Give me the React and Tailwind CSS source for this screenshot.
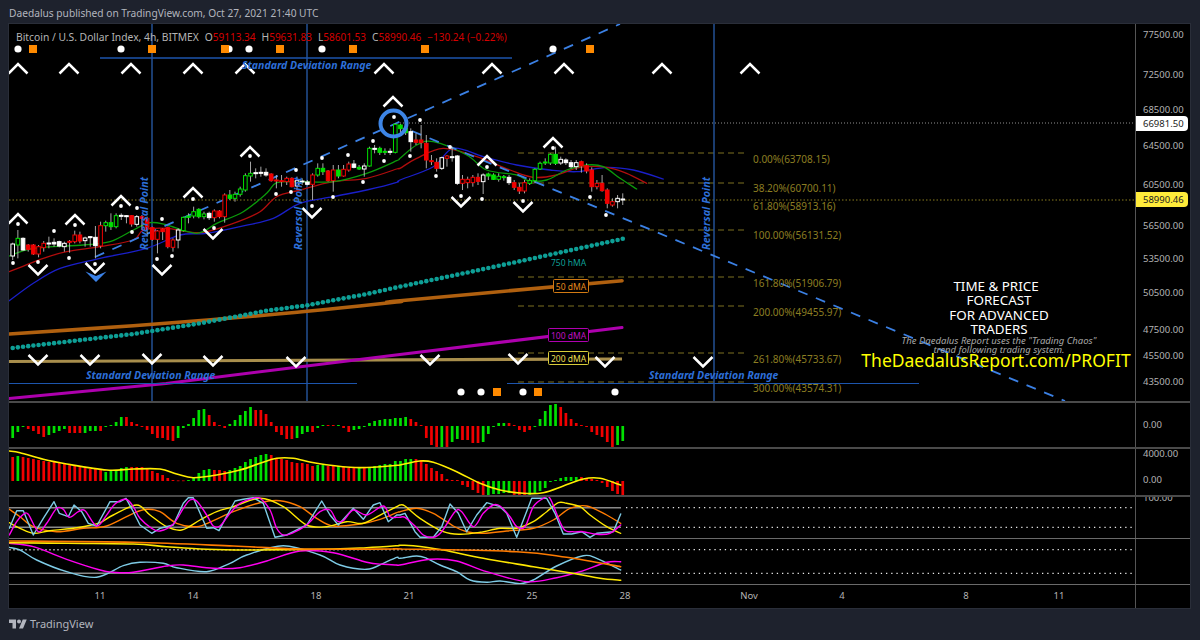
import React from 'react';

// x of a 4h bar on the time scale
const X = (i) => 12.7 + 5.17 * i;
// turn crop readings (3x) back into page coordinates
const z = (ox, oy, pts) => pts.map(([x, y]) => [ox + x / 3, oy + y / 3]);

const smooth = (pts) => {
  let d = `M${pts[0][0].toFixed(1)} ${pts[0][1].toFixed(1)}`;
  for (let i = 0; i < pts.length - 1; i++) {
    const p0 = pts[i - 1] || pts[i];
    const p1 = pts[i];
    const p2 = pts[i + 1];
    const p3 = pts[i + 2] || p2;
    const c1 = [p1[0] + (p2[0] - p0[0]) / 6, p1[1] + (p2[1] - p0[1]) / 6];
    const c2 = [p2[0] - (p3[0] - p1[0]) / 6, p2[1] - (p3[1] - p1[1]) / 6];
    d += `C${c1[0].toFixed(1)} ${c1[1].toFixed(1)} ${c2[0].toFixed(1)} ${c2[1].toFixed(1)} ${p2[0].toFixed(1)} ${p2[1].toFixed(1)}`;
  }
  return d;
};
const straight = (pts) => 'M' + pts.map((p) => `${p[0].toFixed(1)} ${p[1].toFixed(1)}`).join('L');

const GREEN = '#00e000';
const RED = '#f00000';
const WHITE = '#ffffff';

// kind, body top, body bottom, wick top, wick bottom (crop coordinates)
const candlesA = [
  ['w', 192, 228, 188, 240], ['g', 175, 195, 150, 235], ['W', 175, 210, 172, 212], ['R', 195, 208, 192, 215],
  ['R', 195, 222, 192, 225], ['r', 200, 222, 195, 232], ['r', 190, 203, 183, 215], ['W', 189, 192, 170, 205],
  ['W', 187, 192, 175, 200], ['W', 185, 198, 182, 202], ['w', 190, 200, 185, 215], ['R', 184, 187, 180, 218],
  ['r', 165, 185, 152, 190], ['R', 165, 183, 155, 190], ['w', 174, 182, 170, 200], ['W', 170, 173, 168, 200],
  ['W', 172, 197, 138, 235], ['r', 137, 198, 125, 205], ['g', 128, 137, 122, 155], ['G', 128, 140, 100, 150],
  ['g', 107, 140, 100, 145], ['W', 106, 108, 100, 120], ['W', 107, 110, 105, 130], ['R', 107, 132, 105, 140],
  ['w', 110, 133, 105, 140], ['R', 110, 115, 105, 150], ['R', 115, 147, 110, 170], ['R', 143, 178, 140, 182],
  ['r', 153, 178, 150, 220], ['R', 147, 155, 145, 180], ['R', 143, 200, 140, 205], ['r', 180, 202, 175, 215],
  ['w', 150, 180, 145, 205], ['g', 112, 152, 110, 155], ['G', 108, 112, 100, 130], ['g', 95, 108, 80, 115],
  ['G', 88, 110, 85, 115], ['g', 102, 110, 95, 118], ['W', 100, 113, 95, 120], ['r', 93, 113, 88, 125],
  ['R', 93, 110, 90, 115], ['r', 45, 110, 40, 128],
];
const candlesB = [
  ['G', 585, 595, 570, 600], ['g', 583, 595, 575, 605], ['g', 567, 583, 560, 590], ['g', 527, 570, 520, 575],
  ['g', 520, 528, 485, 545], ['W', 518, 520, 505, 535], ['W', 517, 520, 500, 530], ['W', 517, 525, 505, 530],
  ['R', 522, 542, 520, 545], ['R', 540, 543, 525, 565], ['R', 542, 545, 525, 560], ['r', 535, 545, 530, 555],
  ['R', 535, 560, 532, 562], ['w', 542, 558, 530, 570], ['W', 543, 546, 535, 555], ['W', 546, 553, 540, 556],
  ['r', 525, 553, 520, 600], ['g', 505, 525, 490, 530], ['G', 505, 515, 490, 525], ['R', 513, 542, 510, 545],
  ['r', 510, 542, 495, 575], ['G', 510, 528, 495, 535], ['r', 508, 528, 495, 530], ['r', 492, 510, 485, 515],
  ['W', 492, 502, 480, 505], ['G', 502, 507, 495, 510], ['w', 498, 507, 490, 530], ['g', 445, 498, 440, 500],
  ['W', 445, 447, 435, 460], ['G', 445, 457, 440, 465], ['G', 454, 456, 445, 465], ['W', 454, 457, 445, 465],
  ['g', 373, 457, 370, 460], ['G', 375, 386, 372, 400],
];
const candlesC = [
  ['G', 115, 128, 105, 135], ['W', 125, 155, 115, 185], ['R', 150, 157, 130, 165], ['R', 150, 158, 105, 175],
  ['R', 160, 210, 135, 235], ['R', 212, 215, 195, 225], ['R', 217, 235, 205, 245], ['w', 203, 235, 200, 240],
  ['r', 198, 205, 195, 230], ['W', 200, 202, 170, 215], ['W', 198, 280, 195, 285], ['r', 268, 280, 255, 300],
  ['r', 268, 278, 260, 295], ['r', 262, 278, 255, 290], ['R', 262, 274, 250, 285], ['w', 255, 275, 250, 312],
  ['G', 252, 258, 248, 270], ['G', 255, 268, 250, 270], ['g', 259, 268, 250, 275], ['G', 260, 262, 255, 272],
  ['W', 262, 278, 255, 285], ['R', 278, 292, 270, 300], ['R', 292, 303, 280, 312], ['r', 278, 303, 270, 310],
  ['g', 272, 280, 265, 285], ['g', 238, 272, 235, 280], ['g', 220, 237, 215, 240], ['G', 216, 219, 205, 225],
  ['g', 193, 219, 190, 225], ['G', 193, 220, 170, 225], ['w', 208, 219, 200, 225], ['W', 210, 218, 205, 225],
  ['W', 218, 230, 210, 235], ['w', 218, 230, 210, 240], ['R', 215, 228, 212, 248], ['R', 227, 243, 220, 250],
  ['R', 240, 290, 232, 305], ['r', 280, 290, 270, 298], ['R', 280, 302, 255, 305], ['R', 300, 340, 295, 355],
  ['r', 335, 345, 325, 350], ['w', 325, 335, 315, 355], ['W', 327, 329, 310, 345],
];
const candles = [
  ...candlesA.map(([k, a, b, c, d]) => [k, 180 + a / 3, 180 + b / 3, 180 + c / 3, 180 + d / 3]),
  ...candlesB.map(([k, a, b, c, d]) => [k, a / 3, b / 3, c / 3, d / 3]),
  ...candlesC.map(([k, a, b, c, d]) => [k, 90 + a / 3, 90 + b / 3, 90 + c / 3, 90 + d / 3]),
];

const maGreen = [
  ...z(0, 180, [[28, 228], [100, 205], [250, 195], [330, 185], [400, 150], [450, 128], [500, 135], [590, 160], [650, 130], [730, 95], [800, 40]]),
  ...z(0, 0, [[830, 548], [900, 545], [1000, 545], [1100, 520], [1190, 482]]),
  ...z(400, 90, [[0, 205], [50, 165], [100, 155], [200, 195], [260, 240], [350, 255], [385, 272], [440, 270], [500, 240], [560, 225], [610, 230], [660, 265], [710, 297]]),
];
const maRed = [
  ...z(0, 180, [[28, 275], [130, 235], [200, 215], [300, 200], [400, 180], [430, 150], [500, 145], [600, 158], [700, 130], [780, 95]]),
  ...z(0, 0, [[830, 590], [900, 570], [1000, 545], [1100, 535], [1190, 507]]),
  ...z(400, 90, [[0, 235], [50, 205], [130, 175], [230, 200], [330, 240], [400, 262], [470, 255], [540, 232], [620, 232], [680, 250], [740, 280]]),
];
const maBlue = [
  ...z(0, 180, [[28, 362], [100, 310], [180, 265], [300, 235], [440, 205], [540, 165], [620, 160], [720, 140], [820, 115], [900, 70], [1000, 50], [1100, 30], [1190, 7]]),
  ...z(400, 90, [[0, 270], [100, 230], [160, 175], [250, 200], [350, 225], [450, 240], [530, 245], [620, 232], [700, 240], [790, 267]]),
];

// 750 hMA is plotted as dots, one per bar
const tealKnots = [
  ...z(0, 180, [[28, 505], [200, 485], [400, 462], [600, 430], [800, 392], [920, 376], [1100, 342], [1190, 322]]),
  ...z(400, 90, [[0, 590], [200, 548], [400, 505], [675, 445]]),
];
const tealAt = (x) => {
  for (let i = 0; i < tealKnots.length - 1; i++) {
    const [a, b] = tealKnots[i];
    const [c, d] = tealKnots[i + 1];
    if (x >= a && x <= c) return b + ((x - a) / (c - a)) * (d - b);
  }
  return tealKnots[0][1];
};

const caretsUp = [
  [18, 64], [69, 64], [131, 64], [193, 64], [245, 64], [384, 64], [492, 64], [564, 64], [662, 64], [750, 64],
  [250, 147], [393, 97], [18, 214], [75, 215], [121, 196], [193, 188], [553, 138], [487, 156],
];
const caretsDown = [
  [38, 265], [95, 263], [162, 265], [213, 229], [312, 208], [461, 197], [523, 202],
  [38, 355], [90, 355], [152, 354], [213, 356], [296, 357], [430, 355], [518, 354], [605, 357], [703, 357],
];
const smallDots = [
  [250, 156], [296, 170], [322, 158], [348, 155], [373, 141], [394, 117], [384, 161], [363, 182], [333, 197], [276, 194],
  [291, 192], [13, 263], [38, 262], [69, 258], [95, 264], [157, 259], [172, 256], [214, 228], [132, 232], [54, 231],
  [18, 224], [75, 225], [121, 206], [137, 208], [162, 219], [193, 199], [312, 206], [410, 156], [420, 120], [436, 176],
  [450, 147], [461, 196], [482, 199], [487, 167], [523, 201], [553, 148], [590, 197], [606, 215],
];
const bigDots = [[18, 49], [121, 49], [229, 49], [249, 49], [322, 49], [553, 49], [461, 392], [481, 392], [523, 392], [615, 392]];
const squares = [[33, 49], [152, 49], [225, 49], [280, 49], [353, 49], [425, 49], [590, 49], [497, 392], [538, 392]];

const fibLines = [153, 183, 230, 277, 306, 353, 382];
const fibLabels = [
  ['0.00%(63708.15)', 163], ['38.20%(60700.11)', 192], ['61.80%(58913.16)', 210], ['100.00%(56131.52)', 239],
  ['161.80%(51906.79)', 287], ['200.00%(49455.97)', 316], ['261.80%(45733.67)', 363], ['300.00%(43574.31)', 392],
];

const prices = [
  ['77500.00', 'top-[4px]'], ['72500.00', 'top-[44px]'], ['68500.00', 'top-[79px]'], ['64500.00', 'top-[115px]'],
  ['60500.00', 'top-[154px]'], ['56500.00', 'top-[195px]'], ['53500.00', 'top-[228px]'], ['50500.00', 'top-[262px]'],
  ['47500.00', 'top-[299px]'], ['45500.00', 'top-[325px]'], ['43500.00', 'top-[351px]'],
];

// signed bar heights, [colour, px]
const g = (h) => ['g', h];
const r = (h) => ['r', h];
const aoBars = [
  g(-12), g(-6), g(-1), r(-3), r(-5), r(-8), r(-11), g(-9), g(-7), g(-5), g(-3), r(-7), r(-7), r(-7), g(-7), g(-5), g(-5), r(-5), g(-1), g(1),
  g(4), g(9), r(9), r(4), r(2), r(-1), r(-4), r(-8), r(-12), r(-12), r(-14), r(-15), g(-12), g(-2), g(2), g(8), g(16), g(17), r(11), r(4),
  r(1), r(-2), g(2), g(6), g(11), g(15), g(19), r(16), r(16), r(12), r(4), r(-6), r(-9), r(-13), r(-13), g(-12), g(-8), g(-6), r(-6), g(-2),
  g(1), r(1), r(1), g(1), r(-2), r(-6), g(-4), g(-3), g(-1), g(3), g(5), g(6), g(7), g(7), g(8), g(8), g(9), r(7), r(4), r(1),
  r(-12), r(-19), r(-22), g(-21), r(-21), g(-16), g(-13), r(-14), r(-14), r(-17), r(-17), g(-16), g(-8), g(-1), g(3), g(3), r(3), r(1), r(-4), r(-6),
  r(-4), g(-1), g(7), g(15), g(21), g(22), r(19), r(13), r(7), r(3), r(1), r(-1), r(-6), r(-9), r(-11), r(-16), r(-21), g(-19), g(-15),
];
const macdBars = [
  r(24), g(25), r(24), r(23), r(22), r(21), r(20), r(19), r(19), r(18), r(18), r(17), r(16), r(14), r(13), r(12), r(12), r(11),
  g(9), g(10), g(11), g(13), g(14), r(14), r(14), r(14), r(12), r(10), r(8), r(6), r(3), r(1), r(0.6), r(0.6), g(1), g(4), g(8), g(11),
  g(12), r(11), r(11), r(10), g(11), g(13), g(15), g(19), g(22), g(24), g(26), g(27), r(26), r(23), r(22), r(21), r(19), r(18), r(18), r(17),
  r(15), g(16), g(16), r(15), r(15), g(15), r(14), r(13), r(13), g(13), r(13), g(14), g(15), g(16), g(17), g(17), g(20), g(20), g(22), g(22),
  r(22), r(21), r(17), r(13), r(10), r(7), r(2), r(1), r(1), r(-4), r(-6), r(-9), r(-12), r(-14), g(-14), g(-13), g(-13), g(-12), g(-12), r(-14),
  r(-14), r(-14), g(-14), g(-13), g(-10), g(-7), g(-1), g(1), g(3), g(4), g(4), g(4), r(4), r(3), r(2), r(1), r(-2), r(-6), r(-10), r(-13), r(-15),
];

const Bars = ({ bars, base }) => (
  <g>
    {bars.map(([c, h], i) => (
      <rect
        key={i}
        x={X(i) - 1.35}
        y={h > 0 ? base - h : base}
        width="2.7"
        height={Math.max(Math.abs(h), 0.8)}
        fill={c === 'g' ? GREEN : RED}
      />
    ))}
  </g>
);

const macdSignal = z(0, 400, [[28, 153], [60, 158], [130, 178], [200, 192], [320, 210], [400, 207], [480, 207], [530, 222], [580, 233], [650, 225], [720, 210], [780, 190], [830, 175], [880, 175], [950, 190], [1050, 202], [1120, 202], [1190, 196]]).concat(
  z(400, 400, [[0, 195], [60, 183], [100, 187], [170, 215], [240, 250], [300, 270], [370, 280], [430, 278], [490, 258], [550, 237], [600, 235], [662, 255]])
);

const st = {
  cyan: z(0, 400, [[28, 385], [50, 332], [70, 332], [100, 405], [130, 355], [162, 305], [178, 340], [205, 350], [222, 315], [245, 335], [265, 370], [290, 378], [330, 305], [360, 305], [378, 295], [400, 335], [420, 375], [455, 400], [480, 385], [520, 375], [550, 310], [565, 293], [580, 293], [620, 385], [640, 383], [657, 392], [690, 330], [705, 303], [730, 298], [760, 293], [790, 310], [825, 412], [860, 405], [880, 395], [920, 375], [965, 303], [990, 345], [1015, 375], [1060, 325], [1090, 358], [1120, 315], [1140, 308], [1165, 365], [1190, 345]]).concat(
    z(400, 400, [[0, 345], [15, 340], [45, 395], [60, 412], [100, 412], [125, 380], [150, 312], [175, 340], [200, 395], [230, 345], [260, 308], [300, 320], [320, 340], [350, 412], [395, 295], [440, 295], [465, 340], [490, 402], [515, 402], [545, 395], [570, 412], [590, 400], [640, 395], [662, 342]])
  ),
  magenta: z(0, 400, [[28, 405], [50, 365], [70, 343], [85, 343], [115, 395], [140, 370], [170, 325], [190, 328], [208, 352], [235, 335], [255, 332], [290, 378], [320, 345], [345, 312], [378, 298], [400, 320], [420, 355], [455, 385], [480, 393], [520, 372], [550, 325], [570, 300], [590, 303], [620, 345], [640, 378], [660, 378], [690, 340], [720, 310], [760, 295], [780, 295], [810, 330], [830, 385], [850, 405], [880, 398], [920, 375], [960, 335], [990, 330], [1010, 362], [1030, 362], [1060, 330], [1100, 345], [1150, 318], [1170, 350], [1190, 352]]).concat(
    z(400, 400, [[0, 352], [15, 352], [45, 378], [70, 405], [100, 412], [125, 395], [165, 335], [185, 335], [220, 380], [250, 340], [280, 315], [300, 318], [330, 350], [350, 380], [375, 380], [400, 320], [430, 295], [450, 295], [490, 385], [520, 395], [550, 395], [590, 403], [630, 400], [662, 375]])
  ),
  yellow: z(0, 400, [[28, 368], [60, 385], [100, 400], [150, 392], [220, 385], [260, 378], [300, 368], [340, 345], [410, 315], [450, 345], [500, 380], [545, 390], [600, 360], [650, 335], [700, 320], [780, 295], [850, 320], [920, 375], [980, 380], [1040, 365], [1090, 370], [1150, 340], [1190, 320]]).concat(
    z(400, 400, [[0, 315], [15, 318], [60, 355], [130, 395], [180, 403], [240, 397], [300, 385], [350, 385], [400, 365], [440, 335], [475, 308], [500, 310], [540, 320], [570, 345], [620, 380], [662, 400]])
  ),
  orange: z(0, 400, [[28, 328], [60, 350], [100, 380], [170, 395], [250, 385], [320, 378], [400, 340], [440, 328], [480, 335], [530, 370], [590, 380], [640, 362], [700, 335], [780, 308], [840, 302], [900, 320], [950, 355], [1000, 378], [1080, 372], [1140, 358], [1190, 338]]).concat(
    z(400, 400, [[0, 335], [50, 325], [100, 340], [160, 378], [200, 395], [250, 400], [320, 393], [400, 385], [460, 360], [510, 325], [560, 318], [620, 345], [662, 370]])
  ),
};
const st2 = {
  yellow: z(0, 400, [[28, 428], [200, 430], [400, 432], [500, 440], [620, 448], [760, 450], [1000, 447], [1100, 443], [1190, 437]]).concat(
    z(400, 400, [[0, 436], [40, 437], [130, 450], [250, 475], [400, 500], [530, 522], [600, 535], [662, 541]])
  ),
  orange: z(0, 400, [[28, 423], [400, 427], [700, 438], [900, 447], [1190, 447]]).concat(z(400, 400, [[0, 447], [350, 455], [500, 472], [662, 500]])),
  magenta: z(0, 400, [[28, 430], [100, 440], [200, 478], [300, 510], [340, 517], [400, 517], [500, 498], [550, 495], [640, 505], [720, 503], [800, 483], [900, 453], [1000, 458], [1100, 487], [1150, 493], [1190, 495]]).concat(
    z(400, 400, [[0, 495], [90, 478], [170, 483], [260, 515], [380, 545], [470, 533], [540, 515], [620, 487], [662, 485]])
  ),
  cyan: z(0, 400, [[28, 442], [60, 450], [110, 480], [200, 515], [290, 532], [370, 497], [420, 487], [490, 490], [530, 503], [620, 515], [690, 490], [740, 465], [850, 437], [960, 465], [1020, 495], [1100, 508], [1150, 490], [1190, 472]]).concat(
    z(400, 400, [[0, 475], [50, 468], [80, 475], [120, 495], [170, 515], [210, 540], [260, 547], [300, 543], [360, 551], [400, 540], [470, 498], [550, 467], [590, 475], [662, 510]])
  ),
};

const Line = ({ d, color, w = 1.3 }) => <path d={d} fill="none" stroke={color} strokeWidth={w} strokeLinejoin="round" strokeLinecap="round" />;

// one level of an oscillator: solid grey up to the last bar, dots after it
const Level = ({ y, dottedLeft }) => (
  <g>
    <line x1="9" x2="621" y1={y} y2={y} stroke="#8a8a8a" strokeWidth="1.6" strokeDasharray={dottedLeft ? '2 2' : undefined} />
    <line x1="626" x2="1135" y1={y} y2={y} stroke="#e8e8e8" strokeWidth="1.3" strokeDasharray="1.3 3.9" />
  </g>
);

const Candle = ({ c, i }) => {
  const [k, top, bot, wt, wb] = c;
  const col = k === 'g' || k === 'G' ? GREEN : k === 'r' || k === 'R' ? RED : WHITE;
  const filled = k === 'G' || k === 'R' || k === 'W';
  const x = X(i);
  return (
    <g>
      <line x1={x} x2={x} y1={wt} y2={wb} stroke="#b9b9b9" strokeWidth="0.9" />
      <rect
        x={x - 1.8}
        y={top}
        width="3.6"
        height={Math.max(bot - top, 1)}
        fill={filled ? col : '#000'}
        stroke={col}
        strokeWidth="1"
      />
    </g>
  );
};

const Pane = ({ y, h, className, children }) => (
  <svg viewBox={`9 ${y} 1126 ${h}`} className={`block w-[1126px] shrink-0 ${className}`}>
    {children}
  </svg>
);

const MainChart = () => (
  <Pane y={24} h={377} className="h-[377px]">
    <line x1="9" x2="1135" y1="200" y2="200" stroke="#8a7c1e" strokeWidth="1" strokeDasharray="1.5 2" />
    <line x1="400" x2="1135" y1="123" y2="123" stroke="#8f8f8f" strokeWidth="1" strokeDasharray="1 2" />
    {fibLines.map((y) => (
      <line key={y} x1="518" x2="746" y1={y} y2={y} stroke="#7d7020" strokeWidth="1" strokeDasharray="6 4" />
    ))}
    <line x1="152" x2="152" y1="24" y2="401" stroke="#26569f" strokeWidth="1.4" />
    <line x1="307" x2="307" y1="24" y2="401" stroke="#26569f" strokeWidth="1.4" />
    <line x1="714" x2="714" y1="24" y2="401" stroke="#26569f" strokeWidth="1.4" />

    {/* moving averages */}
    <line x1="9" x2="622" y1="361.5" y2="359" stroke="#a88e4c" strokeWidth="3.2" />
    <Line d={smooth(z(0, 180, [[28, 462], [400, 437], [800, 405], [1190, 366]]).concat(z(400, 90, [[0, 632], [666, 572]])))} color="#b0600f" w={3.6} />
    <Line d={straight([[9, 398.5], [166, 383.5], [400, 354.5], [622, 327.5]])} color="#ad00ad" w={3} />
    {Array.from({ length: 119 }).map((_, i) => (
      <circle key={i} cx={X(i)} cy={tealAt(X(i))} r="2.3" fill="#0e9f96" />
    ))}
    <Line d={smooth(maBlue)} color="#1a1fc9" />
    <Line d={smooth(maRed)} color="#b00d0d" />
    <Line d={smooth(maGreen)} color="#0b9a0b" />

    {/* trend lines */}
    <line x1="95" x2="620" y1="257" y2="24" stroke="#3b80e4" strokeWidth="1.8" strokeDasharray="10 9" />
    <line x1="412" x2="1065" y1="131" y2="401" stroke="#3b80e4" strokeWidth="1.8" strokeDasharray="10 9" />

    {candles.map((c, i) => (
      <Candle key={i} c={c} i={i} />
    ))}

    {smallDots.map(([x, y], i) => (
      <circle key={i} cx={x} cy={y} r="1.9" fill="#fff" />
    ))}
    {caretsUp.map(([x, y], i) => (
      <polyline key={i} points={`${x - 9.5},${y + 9.5} ${x},${y} ${x + 9.5},${y + 9.5}`} fill="none" stroke="#fff" strokeWidth="2.5" />
    ))}
    {caretsDown.map(([x, y], i) => (
      <polyline key={i} points={`${x - 9.5},${y} ${x},${y + 9.5} ${x + 9.5},${y}`} fill="none" stroke="#fff" strokeWidth="2.5" />
    ))}
    <polygon points="85.5,271.5 96,276 106.5,271.5 96,282" fill="#3b82e8" />

    {bigDots.map(([x, y], i) => (
      <circle key={i} cx={x} cy={y} r="3.6" fill="#fff" />
    ))}
    {squares.map(([x, y], i) => (
      <rect key={i} x={x - 4} y={y - 4} width="8" height="8" fill="#ff8a00" />
    ))}

    <circle cx="393.5" cy="123.5" r="13" fill="none" stroke="#3d85e6" strokeWidth="4" />

    {/* range lines */}
    <line x1="100" x2="512" y1="58" y2="58" stroke="#1d55ad" strokeWidth="1.4" />
    <line x1="9" x2="357" y1="383.5" y2="383.5" stroke="#1d55ad" strokeWidth="1" />
    <line x1="507" x2="919" y1="383.5" y2="383.5" stroke="#1d55ad" strokeWidth="1" />
    <text x="242" y="68.5" className="text-[10.5px] italic font-bold" fill="#2d6fd8">Standard Deviation Range</text>
    <text x="86" y="379" className="text-[10.5px] italic font-bold" fill="#2d6fd8">Standard Deviation Range</text>
    <text x="649" y="379" className="text-[10.5px] italic font-bold" fill="#2d6fd8">Standard Deviation Range</text>

    {[[148, 250], [302, 250], [710, 250]].map(([x, y]) => (
      <text key={x} x={x} y={y} transform={`rotate(-90 ${x} ${y})`} className="text-[10.8px] italic font-bold" fill="#2d6fd8">
        Reversal Point
      </text>
    ))}

    {fibLabels.map(([t, y]) => (
      <text key={t} x="753" y={y} className="text-[10px]" fill="#8c7e22">{t}</text>
    ))}

    <text x="551" y="266" className="text-[8.5px]" fill="#0e9f96">750 hMA</text>
    <rect x="553.5" y="279.5" width="35" height="13" fill="#000" stroke="#d27a13" rx="1" />
    <text x="571" y="289.5" textAnchor="middle" className="text-[8.5px]" fill="#e58a1c">50 dMA</text>
    <rect x="548.5" y="328.5" width="40" height="13" fill="#000" stroke="#b000b0" rx="1" />
    <text x="568.5" y="338.5" textAnchor="middle" className="text-[8.5px]" fill="#c010c0">100 dMA</text>
    <rect x="548.5" y="351.5" width="40" height="13" fill="#000" stroke="#d8cc3a" rx="1" />
    <text x="568.5" y="361.5" textAnchor="middle" className="text-[8.5px]" fill="#ecdf50">200 dMA</text>
  </Pane>
);

const AxisLabel = ({ className, children }) => (
  <div className={`absolute left-[7px] leading-[14px] text-[9.5px] text-[#b4b4b4] ${className}`}>{children}</div>
);

const Axis = ({ children }) => (
  <div className="relative w-[55px] shrink-0 border-l border-[#555] overflow-hidden">{children}</div>
);

const PanelRow = ({ className, children }) => <div className={`flex border-b-2 border-[#4a4a4a] ${className}`}>{children}</div>;

export default function App() {
  return (
    <div className="w-[1200px] h-[640px] flex flex-col bg-[#1e222d] font-['Noto_Sans',sans-serif]">
      <div className="h-[23px] shrink-0 pl-[9px] pt-[6px] text-[10.2px] leading-[14px] text-[#b2b5be]">
        Daedalus published on TradingView.com, Oct 27, 2021 21:40 UTC
      </div>

      <div className="ml-[8px] w-[1183px] h-[586px] shrink-0 flex flex-col bg-black border border-[#2a2e39]">
        <div className="relative">
          <PanelRow className="h-[379px]">
            <MainChart />
            <Axis>
              {prices.map(([t, c]) => (
                <AxisLabel key={t} className={c}>{t}</AxisLabel>
              ))}
              <div className="absolute left-0 top-[92px] w-[52px] h-[15px] pl-[7px] leading-[15px] text-[9.5px] bg-white text-[#222] rounded-r-sm">66981.50</div>
              <div className="absolute left-0 top-[168px] w-[52px] h-[15px] pl-[7px] leading-[15px] text-[9.5px] bg-[#ffeb3b] text-[#222] rounded-r-sm">58990.46</div>
            </Axis>
          </PanelRow>

          {/* legend sits on top of the main pane */}
          <div className="absolute left-[7px] top-[6px] flex items-baseline text-[10.3px] leading-[14px] text-[#b4b4b4] whitespace-nowrap">
            <span className="mr-[6px]">Bitcoin / U.S. Dollar Index, 4h, BITMEX</span>
            <span className="mr-[6px]">O<span className="text-[10px] text-[#d50000]">59113.34</span></span>
            <span className="mr-[6px]">H<span className="text-[10px] text-[#d50000]">59631.83</span></span>
            <span className="mr-[6px]">L<span className="text-[10px] text-[#d50000]">58601.53</span></span>
            <span className="mr-[6px]">C<span className="text-[10px] text-[#d50000]">58990.46</span></span>
            <span className="text-[10px] text-[#d50000]">−130.24 (−0.22%)</span>
          </div>

          {/* promo text on the right of the main pane */}
          <div className="absolute left-[843px] top-[255px] w-[288px] flex flex-col items-center">
            <div className="ml-[6px] text-center text-[13.4px] leading-[14.4px] text-white">
              <div className="-ml-[6px]">TIME &amp; PRICE</div>
              <div>FORECAST</div>
              <div>FOR ADVANCED</div>
              <div>TRADERS</div>
            </div>
            <div className="ml-[6px] mt-[-1px] text-center text-[9.5px] leading-[9.5px] italic text-[#a8a8a8] whitespace-nowrap">
              <div>The Daedalus Report uses the "Trading Chaos"</div>
              <div>trend following trading system.</div>
            </div>
            <div className="text-[17.5px] leading-[13px] mt-[-1px] text-[#ffff00] whitespace-nowrap">TheDaedalusReport.com/PROFIT</div>
          </div>
        </div>

        <PanelRow className="h-[46px]">
          <Pane y={403} h={44} className="h-[44px]">
            <Bars bars={aoBars} base={426} />
          </Pane>
          <Axis>
            <AxisLabel className="top-[15px]">0.00</AxisLabel>
          </Axis>
        </PanelRow>

        <PanelRow className="h-[48px]">
          <Pane y={449} h={46} className="h-[46px]">
            <Bars bars={macdBars} base={481} />
            <Line d={smooth(macdSignal)} color="#ffee00" w={1.6} />
          </Pane>
          <Axis>
            <AxisLabel className="top-0 h-[9px] !leading-[9px]">4000.00</AxisLabel>
            <AxisLabel className="top-[24px]">0.00</AxisLabel>
          </Axis>
        </PanelRow>

        <div className="flex h-[42px] border-b border-[#6a6a6a]">
          <Pane y={497} h={41} className="h-[41px]">
            <Level y={507.7} />
            <Level y={527.3} />
            <Line d={smooth(st.orange)} color="#ff7b00" w={1.4} />
            <Line d={smooth(st.yellow)} color="#ffe800" w={1.4} />
            <Line d={straight(st.cyan)} color="#7ecbe6" w={1.4} />
            <Line d={smooth(st.magenta)} color="#ff00f0" w={1.4} />
          </Pane>
          <Axis>
            <AxisLabel className="-top-[6px]">100.00</AxisLabel>
          </Axis>
        </div>

        <div className="flex h-[46px] border-b border-[#6a6a6a]">
          <Pane y={539} h={45} className="h-[45px]">
            <Level y={549.7} dottedLeft />
            <Level y={573.3} />
            <Line d={smooth(st2.cyan)} color="#7ecbe6" w={1.4} />
            <Line d={smooth(st2.magenta)} color="#ff00f0" w={1.4} />
            <Line d={smooth(st2.yellow)} color="#ffe800" w={1.6} />
            <Line d={smooth(st2.orange)} color="#ff7b00" w={1.6} />
          </Pane>
          <Axis />
        </div>

        <div className="flex flex-1">
          <svg viewBox="9 585 1126 22" className="block w-[1126px] h-[22px] shrink-0">
            {[['11', 100], ['14', 193], ['18', 316], ['21', 409], ['25', 532], ['28', 625], ['Nov', 749], ['4', 842], ['8', 966], ['11', 1059]].map(([t, x]) => (
              <text key={x} x={x} y="599" textAnchor="middle" className="text-[9.5px]" fill="#b4b4b4">{t}</text>
            ))}
          </svg>
          <Axis />
        </div>
      </div>

      <div className="flex flex-1 items-center pl-[9px] pb-[1px]">
        <svg viewBox="0 4 36 18" className="w-[18px] h-[10px] mr-[3px]" fill="#b2b5be">
          <path d="M14 22H7V11H0V4h14v18zM28 22h-8l7.5-18h8L28 22z" />
          <circle cx="20" cy="8" r="4" />
        </svg>
        <span className="text-[11px] leading-[14px] text-[#b2b5be]">TradingView</span>
      </div>
    </div>
  );
}
